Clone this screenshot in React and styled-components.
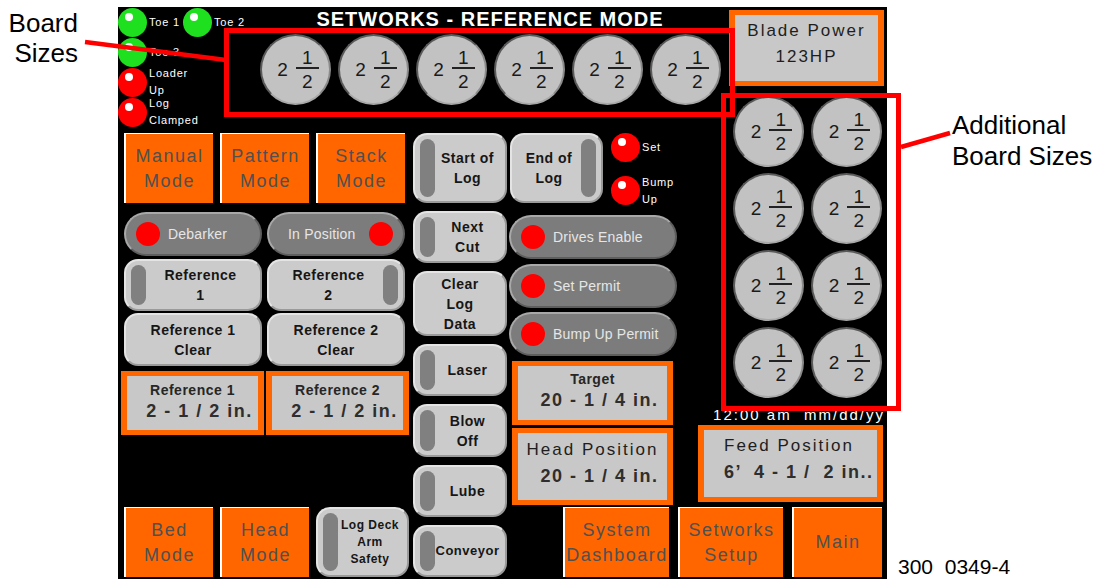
import React from 'react'
import styled, { createGlobalStyle } from 'styled-components'

const GlobalStyle = createGlobalStyle`
  body {
    margin: 0;
    background: #fff;
    font-family: 'Liberation Sans', Arial, sans-serif;
  }
`

const boardSizes = Array.from({ length: 6 })
const extraSizes = Array.from({ length: 8 })

const Fraction = () => (
  <FracWrap>
    <Whole>2</Whole>
    <Frac>
      <FracNum>1</FracNum>
      <FracBar />
      <FracNum>2</FracNum>
    </Frac>
  </FracWrap>
)

const Toggle = ({ handle, w, h, fs, children }) => (
  <TogglePill $w={w} $h={h} $handle={handle}>
    {handle && <Handle />}
    <ToggleText $fs={fs}>{children}</ToggleText>
  </TogglePill>
)

const Status = ({ right, w, children }) => (
  <StatusPill $w={w} $right={right}>
    <Dot />
    <span>{children}</span>
  </StatusPill>
)

const App = () => {
  return (
    <Page>
      <GlobalStyle />
      <LeftNote>Board<br />Sizes</LeftNote>

      <Panel>
        <Indicators>
          <IndicatorRow>
            <Indicator $w={65}>
              <Lamp $color="#1fe01f" />
              <LampLabel>Toe 1</LampLabel>
            </Indicator>
            <Indicator>
              <Lamp $color="#1fe01f" />
              <LampLabel>Toe 2</LampLabel>
            </Indicator>
          </IndicatorRow>
          <IndicatorRow>
            <Indicator>
              <Lamp $color="#1fe01f" />
              <LampLabel>Toe 3</LampLabel>
            </Indicator>
          </IndicatorRow>
          <IndicatorRow>
            <Indicator>
              <Lamp $color="#ff0000" />
              <LampLabel>{'Loader\nUp'}</LampLabel>
            </Indicator>
          </IndicatorRow>
          <IndicatorRow>
            <Indicator>
              <Lamp $color="#ff0000" />
              <LampLabel>{'Log\nClamped'}</LampLabel>
            </Indicator>
          </IndicatorRow>
        </Indicators>

        <TitleArea>
          <Title>SETWORKS - REFERENCE MODE</Title>
          <BoardRow>
            {boardSizes.map((_, i) => (
              <BoardCircle key={i}><Fraction /></BoardCircle>
            ))}
          </BoardRow>
        </TitleArea>

        <BladeArea>
          <ValueBox $w={155} $h={76} $pb={8}>
            <WideLabel>Blade Power</WideLabel>
            <WideLabel>123HP</WideLabel>
          </ValueBox>
        </BladeArea>

        <ExtraGrid>
          {extraSizes.map((_, i) => (
            <BoardCircle key={i}><Fraction /></BoardCircle>
          ))}
        </ExtraGrid>

        <ColA>
          <Row $mt={3} $pl={6} $gap={7}>
            <ModeButton>Manual<br />Mode</ModeButton>
            <ModeButton>Pattern<br />Mode</ModeButton>
            <ModeButton>Stack<br />Mode</ModeButton>
          </Row>
          <Row $mt={9} $pl={6} $gap={5}>
            <Status w={138}>Debarker</Status>
            <Status w={138} right>In Position</Status>
          </Row>
          <Row $mt={3} $pl={6} $gap={5}>
            <Toggle handle="left" w={138} h={52}>{'Reference\n1'}</Toggle>
            <Toggle handle="right" w={138} h={52}>{'Reference\n2'}</Toggle>
          </Row>
          <Row $mt={2} $pl={6} $gap={5}>
            <Toggle w={138} h={53}>{'Reference 1\nClear'}</Toggle>
            <Toggle w={138} h={53}>{'Reference 2\nClear'}</Toggle>
          </Row>
          <Row $mt={5} $pl={3} $gap={2}>
            <ValueBox $w={143} $h={64}>
              <SmallLabel>Reference 1</SmallLabel>
              <BigValue>2 - 1 / 2 in.</BigValue>
            </ValueBox>
            <ValueBox $w={143} $h={64}>
              <SmallLabel>Reference 2</SmallLabel>
              <BigValue>2 - 1 / 2 in.</BigValue>
            </ValueBox>
          </Row>
        </ColA>

        <ColABottom>
          <Row $mt={2} $pl={6} $gap={7}>
            <ModeButton>Bed<br />Mode</ModeButton>
            <ModeButton>Head<br />Mode</ModeButton>
            <Toggle handle="left" w={93} h={70} fs={12}>{'Log Deck\nArm\nSafety'}</Toggle>
          </Row>
        </ColABottom>

        <ColB>
          <Toggle handle="left" w={94} h={70}>{'Start of\nLog'}</Toggle>
          <Toggle handle="left" w={94} h={52}>{'Next\nCut'}</Toggle>
          <Toggle w={94} h={65}>{'Clear\nLog\nData'}</Toggle>
          <Toggle handle="left" w={94} h={52}>Laser</Toggle>
          <Toggle handle="left" w={94} h={53}>{'Blow\nOff'}</Toggle>
          <Toggle handle="left" w={94} h={52}>Lube</Toggle>
          <Toggle handle="left" w={94} h={52} fs={13}>Conveyor</Toggle>
        </ColB>

        <ColC>
          <Row $mt={3} $pl={2} $gap={8}>
            <Toggle handle="right" w={93} h={70}>{'End of\nLog'}</Toggle>
            <SideLamps>
              <Indicator $h={29}>
                <Lamp $color="#ff0000" />
                <LampLabel>Set</LampLabel>
              </Indicator>
              <Indicator $h={29} $mt={14}>
                <Lamp $color="#ff0000" />
                <LampLabel>{'Bump\nUp'}</LampLabel>
              </Indicator>
            </SideLamps>
          </Row>
          <Row $mt={10} $pl={1}>
            <Status w={168}>Drives Enable</Status>
          </Row>
          <Row $mt={5} $pl={1}>
            <Status w={168}>Set Permit</Status>
          </Row>
          <Row $mt={4} $pl={1}>
            <Status w={168}>Bump Up Permit</Status>
          </Row>
          <Row $mt={5} $pl={4}>
            <ValueBox $w={161} $h={64} $pb={3}>
              <SmallLabel>Target</SmallLabel>
              <BigValue>20 - 1 / 4 in.</BigValue>
            </ValueBox>
          </Row>
          <Row $mt={3} $pl={4}>
            <ValueBox $w={161} $h={77} $pb={8}>
              <WideLabel>Head Position</WideLabel>
              <BigValue>20 - 1 / 4 in.</BigValue>
            </ValueBox>
          </Row>
        </ColC>

        <FeedArea>
          <Clock>{'12:00 am  mm/dd/yy'}</Clock>
          <ValueBox $w={185} $h={77} $pb={9} $left>
            <WideLabel>Feed Position</WideLabel>
            <BigValue $pl={0}>{'6’  4 - 1 /  2 in..'}</BigValue>
          </ValueBox>
        </FeedArea>

        <BottomRight>
          <ModeButton $w={106}>System<br />Dashboard</ModeButton>
          <ModeButton $w={105}>Setworks<br />Setup</ModeButton>
          <ModeButton $w={90}>Main</ModeButton>
        </BottomRight>
      </Panel>

      <RightNote>
        <NoteText>Additional<br />Board Sizes</NoteText>
        <PartNo>{'300  0349-4'}</PartNo>
      </RightNote>

      <RedFrame $x={224} $y={28} $w={511} $h={89} />
      <RedFrame $x={721} $y={93} $w={180} $h={318} />
      <Leaders viewBox="0 0 1099 579">
        <line x1="85" y1="42" x2="226" y2="60" stroke="#ff0000" strokeWidth="4.5" />
        <line x1="901" y1="147" x2="950" y2="133" stroke="#ff0000" strokeWidth="4.5" />
      </Leaders>
    </Page>
  )
}

export default App



const Page = styled.div`
  position: relative;
  width: 1099px;
  height: 579px;
  display: flex;
  overflow: hidden;
  background: #fff;
`

const LeftNote = styled.div`
  width: 118px;
  flex-shrink: 0;
  box-sizing: border-box;
  padding: 8px 40px 0 0;
  text-align: right;
  font-size: 26px;
  line-height: 30px;
  color: #000;
`

const RightNote = styled.div`
  flex: 1;
  display: flex;
  flex-direction: column;
  justify-content: space-between;
  padding: 110px 0 1px 11px;
  color: #000;
`

const NoteText = styled.div`
  padding-left: 54px;
  font-size: 26px;
  line-height: 31px;
`

const PartNo = styled.div`
  font-size: 21px;
  line-height: 22px;
  white-space: pre;
`

const Panel = styled.div`
  margin-top: 7px;
  width: 769px;
  height: 572px;
  flex-shrink: 0;
  background: #000;
  display: grid;
  grid-template-columns: 140px 152px 98px 170px 44px 165px;
  grid-template-rows: 85px 38px 275px 100px 74px;
`

const Indicators = styled.div`
  grid-column: 1 / 2;
  grid-row: 1 / 3;
  display: flex;
  flex-direction: column;
`

const IndicatorRow = styled.div`
  display: flex;
  height: 30px;
  align-items: center;
`

const Indicator = styled.div`
  display: flex;
  align-items: center;
  width: ${({ $w }) => ($w ? `${$w}px` : 'auto')};
  height: ${({ $h }) => ($h ? `${$h}px` : 'auto')};
  margin-top: ${({ $mt }) => $mt || 0}px;
`

const Lamp = styled.div`
  position: relative;
  width: 29px;
  height: 29px;
  border-radius: 50%;
  background: ${({ $color }) => $color};
  flex-shrink: 0;

  &::after {
    content: '';
    position: absolute;
    left: 7px;
    top: 5px;
    width: 8px;
    height: 8px;
    border-radius: 50%;
    background: #fff;
  }
`

const LampLabel = styled.div`
  margin-left: 2px;
  color: #fff;
  font-size: 11px;
  letter-spacing: 0.8px;
  line-height: 17px;
  white-space: pre;
`

const TitleArea = styled.div`
  grid-column: 2 / 6;
  grid-row: 1 / 3;
  display: flex;
  flex-direction: column;
  align-items: center;
`

const Title = styled.div`
  color: #fff;
  font-weight: bold;
  font-size: 20px;
  letter-spacing: 1px;
  line-height: 24px;
`

const BoardRow = styled.div`
  display: flex;
  gap: 7px;
  margin-top: 3px;
`

const BoardCircle = styled.div`
  box-sizing: border-box;
  width: 71px;
  height: 71px;
  border-radius: 50%;
  background: #c2c2c2;
  border: 2px solid;
  border-color: #5a5a5a #8a8a8a #a8a8a8 #5a5a5a;
  display: flex;
  align-items: center;
  justify-content: center;
  padding-left: 6px;
`

const FracWrap = styled.div`
  display: flex;
  align-items: center;
  color: #1a1a1a;
  font-size: 19px;
`

const Whole = styled.span`
  margin-right: 8px;
  line-height: 20px;
`

const Frac = styled.div`
  display: flex;
  flex-direction: column;
  align-items: center;
  width: 23px;
`

const FracNum = styled.span`
  line-height: 16px;
`

const FracBar = styled.div`
  width: 23px;
  height: 2px;
  margin: 1px 0 5px;
  background: #222;
`

const BladeArea = styled.div`
  grid-column: 6 / 7;
  grid-row: 1 / 2;
  padding: 3px 0 0 7px;
`

const ExtraGrid = styled.div`
  grid-column: 6 / 7;
  grid-row: 2 / 4;
  display: grid;
  grid-template-columns: 71px 71px;
  grid-auto-rows: 71px;
  column-gap: 7px;
  row-gap: 6px;
  align-content: start;
  padding: 4px 0 0 11px;
`

const ValueBox = styled.div`
  box-sizing: border-box;
  width: ${({ $w }) => $w}px;
  height: ${({ $h }) => $h}px;
  border-style: solid;
  border-color: #ff6600;
  border-width: 5px 6px;
  background: #c8c8c8;
  display: flex;
  flex-direction: column;
  justify-content: center;
  align-items: ${({ $left }) => ($left ? 'flex-start' : 'center')};
  padding: 0 0 ${({ $pb }) => $pb || 0}px ${({ $left }) => ($left ? 20 : 0)}px;
  color: #262626;
`

const SmallLabel = styled.div`
  font-weight: bold;
  font-size: 14px;
  letter-spacing: 0.5px;
  line-height: 16px;
`

const WideLabel = styled.div`
  font-size: 17px;
  letter-spacing: 2px;
  line-height: 26px;
  color: #1e1e1e;
`

const BigValue = styled.div`
  font-weight: bold;
  font-size: 18px;
  letter-spacing: 1.5px;
  line-height: 26px;
  white-space: pre;
  padding-left: ${({ $pl }) => ($pl === undefined ? 14 : $pl)}px;
  color: #2e2e2e;
`

const ColA = styled.div`
  grid-column: 1 / 3;
  grid-row: 3 / 5;
  display: flex;
  flex-direction: column;
`

const ColABottom = styled.div`
  grid-column: 1 / 3;
  grid-row: 5 / 6;
`

const Row = styled.div`
  display: flex;
  gap: ${({ $gap }) => $gap || 0}px;
  margin-top: ${({ $mt }) => $mt || 0}px;
  padding-left: ${({ $pl }) => $pl || 0}px;
`

const ModeButton = styled.div`
  box-sizing: border-box;
  width: ${({ $w }) => $w || 89}px;
  height: 70px;
  background: #ff6600;
  border-top: 1px solid #fff;
  border-left: 2px solid #fff;
  display: flex;
  align-items: center;
  justify-content: center;
  text-align: center;
  color: #505050;
  font-size: 18px;
  letter-spacing: 1.5px;
  line-height: 25px;
`

const TogglePill = styled.div`
  box-sizing: border-box;
  width: ${({ $w }) => $w}px;
  height: ${({ $h }) => $h}px;
  flex-shrink: 0;
  background: #cbcbcb;
  border: 2px solid #e4e4e4;
  border-right-color: #9a9a9a;
  border-bottom-color: #9a9a9a;
  border-radius: 14px;
  display: flex;
  flex-direction: ${({ $handle }) => ($handle === 'right' ? 'row-reverse' : 'row')};
  padding: 4px 5px;
  color: #161616;
`

const Handle = styled.div`
  width: 15px;
  flex-shrink: 0;
  border-radius: 8px;
  background: #808080;
`

const ToggleText = styled.div`
  flex: 1;
  display: flex;
  align-items: center;
  justify-content: center;
  text-align: center;
  font-weight: bold;
  font-size: ${({ $fs }) => $fs || 14}px;
  line-height: ${({ $fs }) => ($fs === 12 ? 17 : 20)}px;
  letter-spacing: 0.5px;
  white-space: pre;
`

const StatusPill = styled.div`
  box-sizing: border-box;
  width: ${({ $w }) => $w}px;
  height: 44px;
  background: #7c7c7c;
  border: 2px solid #a8a8a8;
  border-right-color: #5e5e5e;
  border-bottom-color: #5e5e5e;
  border-radius: 22px;
  display: flex;
  align-items: center;
  flex-direction: ${({ $right }) => ($right ? 'row-reverse' : 'row')};
  justify-content: ${({ $right }) => ($right ? 'space-between' : 'flex-start')};
  gap: 8px;
  padding: ${({ $right }) => ($right ? '0 10px 0 19px' : '0 10px')};
  color: #e6e6e6;
  font-size: 14px;
  letter-spacing: 0.2px;
`

const Dot = styled.div`
  width: 24px;
  height: 24px;
  border-radius: 50%;
  background: #ff0000;
  flex-shrink: 0;
`

const ColB = styled.div`
  grid-column: 3 / 4;
  grid-row: 3 / 6;
  display: flex;
  flex-direction: column;
  gap: 8px;
  padding: 3px 0 0 3px;
`

const ColC = styled.div`
  grid-column: 4 / 5;
  grid-row: 3 / 5;
  display: flex;
  flex-direction: column;
`

const SideLamps = styled.div`
  display: flex;
  flex-direction: column;
`

const FeedArea = styled.div`
  grid-column: 5 / 7;
  grid-row: 4 / 5;
  display: flex;
  flex-direction: column;
  align-items: flex-end;
  padding-right: 4px;
`

const Clock = styled.div`
  color: #fff;
  font-size: 15px;
  letter-spacing: 2px;
  line-height: 17px;
  white-space: pre;
  margin: 1px -2px 2px 0;
`

const BottomRight = styled.div`
  grid-column: 4 / 7;
  grid-row: 5 / 6;
  display: flex;
  gap: 9px;
  padding: 2px 0 0 55px;
`

const RedFrame = styled.div`
  position: absolute;
  left: ${({ $x }) => $x}px;
  top: ${({ $y }) => $y}px;
  width: ${({ $w }) => $w}px;
  height: ${({ $h }) => $h}px;
  box-sizing: border-box;
  border: 5px solid #ff0000;
  pointer-events: none;
`

const Leaders = styled.svg`
  position: absolute;
  left: 0;
  top: 0;
  width: 1099px;
  height: 579px;
  pointer-events: none;
`
